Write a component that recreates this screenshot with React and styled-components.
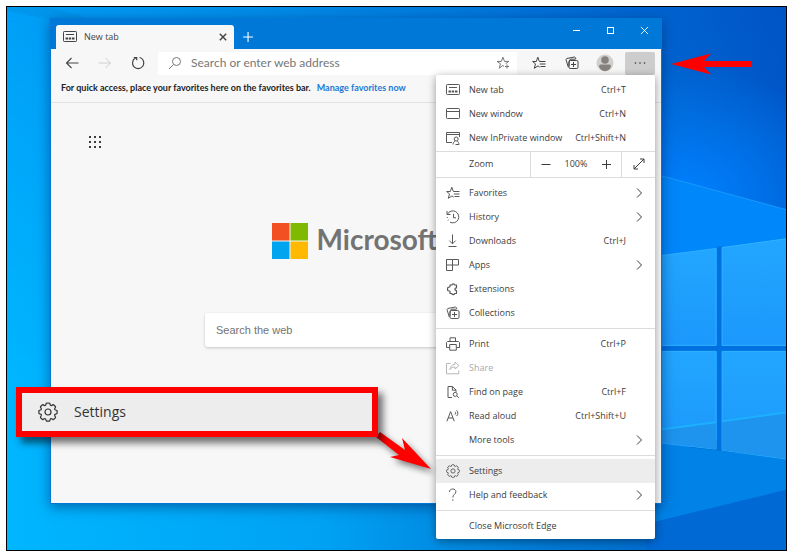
import React from "react";
import styled, { createGlobalStyle } from "styled-components";

const GlobalStyle = createGlobalStyle`
  *, *::before, *::after { box-sizing: border-box; }
  body {
    margin: 0;
    background: #fff;
    color: #333;
    font-family: "Open Sans", "Noto Sans", sans-serif;
    font-size: 9px;
    line-height: 12px;
  }
  button, input { font: inherit; color: inherit; }
  button { padding: 0; border: 0; background: none; }
  svg { display: block; }
`;

/* ---------- icons ---------- */

const Svg = styled.svg`
  flex: none;
  width: ${(p) => p.$size || 14}px;
  height: ${(p) => p.$size || 14}px;
  fill: none;
  stroke: currentColor;
  stroke-width: ${(p) => p.$stroke || 1};
`;

const Icon = ({ size, stroke, box = 14, children }) => (
  <Svg $size={size} $stroke={stroke} viewBox={`0 0 ${box} ${box}`} aria-hidden="true">
    {children}
  </Svg>
);

const TabIcon = () => (
  <Icon>
    <rect x="0.5" y="1.5" width="13" height="10" rx="0.8" />
    <path d="M3 4.500h8" />
    <path d="M2.500 8.500h2.500M5.700 8.500h2.500M9 8.500h2.500" strokeWidth="2" />
  </Icon>
);
const WindowIcon = () => (
  <Icon>
    <rect x="0.5" y="1.5" width="13" height="10" rx="0.8" />
    <path d="M.5 4.500h13" />
  </Icon>
);
const PrivateIcon = () => (
  <Icon>
    <path d="M6 11.500H.5v-10h13V6M.5 3.500h13" />
    <circle cx="10.200" cy="8" r="2" />
    <path d="M7 13.500c.2-2 1.200-3 2.200-3.700M11 9.900c1.200.8 1.800 1.800 2 3.600H9.500" />
  </Icon>
);
const FavoritesIcon = ({ size }) => (
  <Icon size={size}>
    <path d="M13.500 5.500H7.400L5.800 1.200 4.300 5.500H.6L3.500 7.900 2.300 12.300 6 9.900l1.700 1.200M7.800 8h5.700M8.500 10.500h5" />
  </Icon>
);
const HistoryIcon = () => (
  <Icon>
    <path d="M1 1v3.500h3.500M1.500 4A6 6 0 1 1 4 12.200M7.500 3.800v4H10" />
    <path d="M.8 7.500h1M1.800 10.300l.8-.4" />
  </Icon>
);
const DownloadIcon = () => (
  <Icon>
    <path d="M6.500.5v9.300M3.300 6.600l3.200 3.200 3.200-3.200M2.500 12.500h8" />
  </Icon>
);
const AppsIcon = () => (
  <Icon>
    <path d="M.5 1.500h12v5.500H.5zM6.500 1.500v11h-6v-11" />
  </Icon>
);
const ExtensionsIcon = () => (
  <Icon>
    <path d="M4 4.700V3h1.800a1.500 1.500 0 0 1 2.900 0H10.500v2.800c-2.200.2-2.200 2.700 0 2.900v2.800H8.700a1.500 1.500 0 0 1-2.900 0H4V9.300L1.600 8.500V5.700z" strokeWidth="1.200" strokeLinejoin="round" />
  </Icon>
);
const CollectionsIcon = ({ size }) => (
  <Icon size={size}>
    <rect x="4" y="4.500" width="9" height="8" rx="1.200" />
    <path d="M8.500 6v5M6 8.500h5M3.300 11.200L1 3.500l.7-1L9.600 1l.9.700.4 1.300M4 10V6L5.300 3.200h5.200" />
  </Icon>
);
const PrintIcon = () => (
  <Icon>
    <path d="M4 4.500V.8h5.500v3.700M3.500 10.500h-3v-5l1-1h11l1 1v5h-3" />
    <path d="M3.700 7.500h6.600v5.700H3.700z" />
  </Icon>
);
const ShareIcon = () => (
  <Icon>
    <path d="M4.500 2.500h-4v10.300h12.300V9.500M9 1.200l4 3.400-4 3.300V6C6.500 6 5 6.800 3.800 8.700 4.200 5.500 6 3.500 9 3.200z" />
  </Icon>
);
const FindIcon = () => (
  <Icon>
    <path d="M6 12.500H2v-11h4.500L10 5v1.800M6.400 1.500v3.700H10" />
    <circle cx="9.200" cy="9.400" r="2" />
    <path d="M10.700 10.900l2.200 2" />
  </Icon>
);
const ReadIcon = () => (
  <Icon>
    <path d="M.9 12.300L4.600 2.600l3.700 9.700M2.200 9h4.800M9 2.800c.8.8.8 2 0 2.800M10.600 1.300c1.700 1.700 1.700 4.200 0 5.800" />
  </Icon>
);
const gearPath =
  "M8.300 1.300q.8-.6 1.700 0 .9-.6 1.700 0l.7 2q.7.500 1.300.1l1.500-.8q1 .1 1.200 1.200 1.100.2 1.200 1.200l-.8 1.500q-.2.7.1 1.300l2 .7q.5.600 0 1.500.5.900 0 1.700l-2 .7q-.5.600-.1 1.300l.8 1.500q-.1 1-1.200 1.200-.2 1.100-1.200 1.200l-1.500-.8q-.7-.2-1.300.1l-.7 2q-.8.500-1.700 0-.9.500-1.700 0l-.7-2q-.6-.4-1.300-.1l-1.500.8q-1-.1-1.200-1.200-1.100-.2-1.200-1.200l.8-1.500q.3-.7-.1-1.300l-2-.7q-.5-.8 0-1.700-.5-.9 0-1.500l2-.7q.4-.6.1-1.300l-.8-1.500q.1-1 1.200-1.200.2-1.100 1.200-1.200l1.500.8q.7.300 1.300-.1z";
const GearIcon = ({ size, stroke = 1.3 }) => (
  <Icon size={size} stroke={stroke} box={20}>
    <path d={gearPath} strokeLinejoin="round" />
    <circle cx="10" cy="10" r="3" />
  </Icon>
);
const HelpIcon = () => (
  <Icon>
    <path d="M3.500 4C3.500 2 4.800 1 6.700 1c1.900 0 3.200 1 3.200 2.700C9.900 6.200 6.800 6.500 6.800 9.500M6.800 11.300v1.500" />
  </Icon>
);
const ChevronIcon = () => (
  <Icon size={12} box={12}>
    <path d="M4 1.500L8.500 6 4 10.500" />
  </Icon>
);
const MinusIcon = () => <Icon size={10} box={10}><path d="M.5 5.500h9" /></Icon>;
const PlusIcon = ({ size = 10 }) => <Icon size={size} box={10}><path d="M1 5.500h9M5.500 1v9" /></Icon>;
const ExpandIcon = () => (
  <Icon size={12} box={12}>
    <path d="M1 11L11 1M7 1h4v4M1 7v4h4" />
  </Icon>
);
const BackIcon = () => <Icon stroke={1.100}><path d="M13.500 7H1.500M6.500 2L1.500 7l5 5" /></Icon>;
const ForwardIcon = () => <Icon><path d="M.5 7h12M7.500 2l5 5-5 5" /></Icon>;
const ReloadIcon = () => (
  <Icon stroke={1.200}>
    <path d="M8.500 1.500a5.600 5.600 0 0 1 1 10.500M4.800 12A5.600 5.600 0 0 1 5.200 1.700M2.800 1.500h2.900v2.800M4.800 12a5.600 5.600 0 0 0 4.700 0" />
  </Icon>
);
const SearchIcon = () => (
  <Icon>
    <circle cx="8.500" cy="5.500" r="4" />
    <path d="M5.500 8.500L1 13" />
  </Icon>
);
const AddStarIcon = () => (
  <Icon>
    <path d="M8 10.300l-1.200-.8-3.600 2.700 1.300-4.400L1 5.400h4.300L6.900 1.200l1.600 4.200h4.300L9.600 7.700M11 8.500v4M9 10.500h4" />
  </Icon>
);
const CloseIcon = ({ size = 9, stroke = 1 }) => (
  <Icon size={size} stroke={stroke} box={10}><path d="M1 1l8 8M9 1L1 9" /></Icon>
);
const MaximizeIcon = () => <Icon size={9} box={9}><rect x="1.500" y="1.500" width="6" height="6" /></Icon>;
const MinimizeIcon = () => <Icon size={9} box={9}><path d="M1 4.500h7" /></Icon>;
const DotsIcon = () => (
  <Icon>
    <g fill="currentColor" stroke="none">
      <circle cx="2.500" cy="7" r="0.800" />
      <circle cx="7" cy="7" r="0.800" />
      <circle cx="11.500" cy="7" r="0.800" />
    </g>
  </Icon>
);
const ProfileIcon = () => (
  <Icon size={18} box={18}>
    <g stroke="none">
      <circle cx="9" cy="9" r="8.500" fill="#d2d0ce" />
      <circle cx="9" cy="6" r="3.800" fill="#85827e" />
      <path d="M3 12.500c0-1.500 1-2 2-2h8c1 0 2 .5 2 2-1 3-3.500 4.500-6 4.500s-5-1.500-6-4.500z" fill="#85827e" />
    </g>
  </Icon>
);
const GridIcon = () => (
  <Icon>
    <g fill="#3b3b3b" stroke="none">
      {[1, 6, 11].map((y) =>
        [0, 5, 10].map((x) => <rect key={`${x}-${y}`} x={x} y={y} width="2" height="2" />)
      )}
    </g>
  </Icon>
);

/* ---------- desktop ---------- */

const Page = styled.div`
  min-height: 100vh;
  padding: 6px 7px 9px 6px;
`;
const Desktop = styled.div`
  position: relative;
  overflow: hidden;
  min-height: calc(100vh - 15px);
  padding: 11px 124px 46px 43px;
  border: 1px solid #000;
  background: #0088e8;
`;
const WallpaperArt = styled.svg`
  position: absolute;
  inset: 0;
  width: 100%;
  height: 100%;
`;

const Wallpaper = () => (
  <WallpaperArt viewBox="0 0 780 544" preserveAspectRatio="none" aria-hidden="true">
    <defs>
      <linearGradient id="sky" x1="0" y1="0" x2="1" y2="0">
        <stop offset="0" stopColor="#00a0f8" />
        <stop offset="0.35" stopColor="#008ce8" />
        <stop offset="0.7" stopColor="#0070d8" />
        <stop offset="1" stopColor="#0054c6" />
      </linearGradient>
      <linearGradient id="floor" x1="0" y1="0" x2="1" y2="0">
        <stop offset="0" stopColor="#00b6ff" />
        <stop offset="0.4" stopColor="#00a2f4" />
        <stop offset="0.7" stopColor="#0078d4" />
        <stop offset="1" stopColor="#0060cc" />
      </linearGradient>
      <linearGradient id="fade" x1="0" y1="0" x2="0" y2="1">
        <stop offset="0" stopColor="#fff" stopOpacity="0" />
        <stop offset="0.7" stopColor="#fff" />
      </linearGradient>
      <mask id="low"><rect width="780" height="544" fill="url(#fade)" /></mask>
      <radialGradient id="glow">
        <stop offset="0" stopColor="#0080ff" />
        <stop offset="1" stopColor="#0080ff" stopOpacity="0" />
      </radialGradient>
      <linearGradient id="pane" x1="0" y1="0" x2="0" y2="1">
        <stop offset="0" stopColor="#22a6ff" />
        <stop offset="1" stopColor="#1c98fc" />
      </linearGradient>
    </defs>
    <rect width="780" height="544" fill="url(#sky)" />
    <rect width="780" height="544" fill="url(#floor)" mask="url(#low)" />
    <path d="M0 0h40l90 24-90-12L0 4z" fill="#0090e4" opacity="0.500" />
    <ellipse cx="680" cy="190" rx="170" ry="130" fill="url(#glow)" />
    <path d="M640 165L780 203V420L640 450z" fill="#0087fa" />
    <path d="M640 165L780 203" stroke="#189afc" />
    <path d="M711 240h5V452h-5zM640 339h140v6H640z" fill="#0070e0" />
    <path d="M640 436L780 452V484L640 518z" fill="#0082e6" />
    <path d="M640 518L780 484V544H640z" fill="#0069d4" />
    <g fill="url(#pane)" stroke="#30b2ff">
      <path d="M640 251L710 242V339H640z" />
      <path d="M716 241L782 232V339H716z" />
      <path d="M640 345H710V443L640 435z" />
      <path d="M716 345H782V453L716 444z" />
    </g>
    <path d="M640 425L710 416V443L640 435zM716 415L782 406V453L716 444z" fill="#1e94ee" />
    <path d="M640 425L710 416M716 415L782 406" stroke="#1cb0ff" strokeWidth="2" />
  </WallpaperArt>
);

/* ---------- browser window ---------- */

const BrowserWindow = styled.main`
  position: relative;
  display: flex;
  flex-direction: column;
  min-height: calc(100vh - 74px);
  border: 1px solid #0078d7;
  background: #f7f7f7;
  box-shadow: 0 3px 12px rgba(0, 30, 90, 0.5);
`;
const TitleBar = styled.header`
  display: flex;
  height: 30px;
  padding-left: 5px;
  background: #0078d7;
  color: #fff;
`;
const Tab = styled.div`
  display: flex;
  align-items: center;
  gap: 7px;
  width: 178px;
  margin-top: 6px;
  padding: 0 6px 0 7px;
  border-radius: 3px 3px 0 0;
  background: #f7f7f7;
  color: #444;
`;
const TabTitle = styled.span`
  flex: 1;
`;
const TabButton = styled.button`
  display: grid;
  place-items: center;
  width: ${(p) => (p.$wide ? 26 : 10)}px;
  margin-top: ${(p) => (p.$wide ? 5 : 0)}px;
`;
const WindowControls = styled.div`
  display: flex;
  height: 22px;
  margin-left: auto;
`;
const ControlButton = styled.button`
  display: grid;
  place-items: center;
  width: 34px;
`;
const Toolbar = styled.div`
  display: flex;
  align-items: center;
  height: 27px;
  padding: 1px 6px 0 4px;
`;
const ToolButton = styled.button`
  display: grid;
  place-items: center;
  width: 33px;
  height: 22px;
  color: ${(p) => (p.$muted ? "#d0d0d0" : "#444")};
`;
const AddressBar = styled.label`
  display: flex;
  flex: 1;
  align-items: center;
  gap: 9px;
  height: 23px;
  margin: 0 5px 0 4px;
  padding: 0 7px 0 10px;
  border-radius: 2px;
  background: #fff;
  color: #777;
`;
const AddressInput = styled.input`
  flex: 1;
  min-width: 0;
  padding: 0;
  border: 0;
  outline: 0;
  background: none;
  font-family: Lato, "Open Sans", sans-serif;
  font-size: 12px;
  line-height: 18px;
  &::placeholder { color: #777; opacity: 1; }
`;
const MoreAnchor = styled.div`
  position: relative;
  width: 30px;
  margin-left: 4px;
`;
const MoreButton = styled.button`
  display: grid;
  place-items: center;
  width: 100%;
  height: 23px;
  border-radius: 2px;
  background: #cdcdcd;
`;
const FavoritesBar = styled.div`
  display: flex;
  align-items: center;
  gap: 6px;
  height: 27px;
  padding: 0 10px 3px;
  border-bottom: 1px solid #e3e3e3;
  color: #222;
  font-family: Lato, "Open Sans", sans-serif;
  font-weight: 700;
  white-space: nowrap;
`;
const FavoritesLink = styled.a`
  color: #1a7ad4;
  text-decoration: none;
`;
const NewTabPage = styled.section`
  display: flex;
  flex: 1;
  flex-direction: column;
  align-items: center;
  padding: 32px 38px;
`;
const LauncherButton = styled.button`
  align-self: flex-start;
`;
const Brand = styled.div`
  display: flex;
  align-items: center;
  gap: 9px;
  margin: 74px 3px 0 0;
`;
const BrandName = styled.span`
  padding-bottom: 3px;
  color: #737373;
  font-family: Lato, "Open Sans", sans-serif;
  font-size: 28px;
  font-weight: 700;
  line-height: 33px;
`;
const SearchInput = styled.input`
  width: 302px;
  height: 34px;
  margin-top: 54px;
  padding: 0 11px;
  border: 0;
  border-radius: 3px;
  outline: 0;
  background: #fff;
  box-shadow: 0 1px 3px rgba(0, 0, 0, 0.2);
  font-family: "Liberation Sans", Arial, sans-serif;
  font-size: 11px;
  &::placeholder { color: #737373; opacity: 1; }
`;

/* ---------- settings menu ---------- */

const Menu = styled.div`
  position: absolute;
  z-index: 2;
  top: 100%;
  right: 0;
  width: 219px;
  padding: 3px 0 1px;
  border-radius: 2px;
  background: #fff;
  box-shadow: 0 2px 9px rgba(0, 0, 0, 0.4);
`;
const MenuGroup = styled.div`
  & + & {
    margin-top: 3px;
    padding-top: 3px;
    border-top: 1px solid #dcdcdc;
  }
`;
const MenuItem = styled.button`
  display: flex;
  align-items: center;
  gap: 9px;
  width: 100%;
  height: 24px;
  padding: 0 10px;
  background: ${(p) => (p.$active ? "#ededed" : "transparent")};
  color: ${(p) => (p.disabled ? "#aaa" : "#3c3c3c")};
  text-align: left;
  white-space: nowrap;
`;
const IconSlot = styled.span`
  width: 14px;
  opacity: 0.85;
`;
const ItemLabel = styled.span`
  flex: 1;
`;
const Shortcut = styled.span`
  margin-right: 19px;
`;
const ZoomRow = styled.div`
  display: flex;
  height: 26px;
  margin: 1px 0 -3px;
  border-top: 1px solid #dcdcdc;
  color: #3c3c3c;
`;
const ZoomLabel = styled.span`
  flex: 1;
  align-self: center;
  padding-left: 33px;
`;
const ZoomControls = styled.div`
  display: flex;
  align-items: center;
  justify-content: space-between;
  width: 92px;
  padding: 0 10px;
  border: 1px solid #dcdcdc;
  border-width: 0 1px;
`;
const IconButton = styled.button`
  display: grid;
  place-items: center;
`;
const ExpandButton = styled(IconButton)`
  width: 33px;
`;

const groups = [
  [
    { label: "New tab", icon: TabIcon, keys: "Ctrl+T" },
    { label: "New window", icon: WindowIcon, keys: "Ctrl+N" },
    { label: "New InPrivate window", icon: PrivateIcon, keys: "Ctrl+Shift+N" },
    { zoom: true },
  ],
  [
    { label: "Favorites", icon: FavoritesIcon, more: true },
    { label: "History", icon: HistoryIcon, more: true },
    { label: "Downloads", icon: DownloadIcon, keys: "Ctrl+J" },
    { label: "Apps", icon: AppsIcon, more: true },
    { label: "Extensions", icon: ExtensionsIcon },
    { label: "Collections", icon: CollectionsIcon },
  ],
  [
    { label: "Print", icon: PrintIcon, keys: "Ctrl+P" },
    { label: "Share", icon: ShareIcon, disabled: true },
    { label: "Find on page", icon: FindIcon, keys: "Ctrl+F" },
    { label: "Read aloud", icon: ReadIcon, keys: "Ctrl+Shift+U" },
    { label: "More tools", more: true },
  ],
  [
    { label: "Settings", icon: GearIcon, active: true },
    { label: "Help and feedback", icon: HelpIcon, more: true },
  ],
  [{ label: "Close Microsoft Edge" }],
];

const Zoom = () => (
  <ZoomRow>
    <ZoomLabel>Zoom</ZoomLabel>
    <ZoomControls>
      <IconButton aria-label="Zoom out"><MinusIcon /></IconButton>
      <span>100%</span>
      <IconButton aria-label="Zoom in"><PlusIcon /></IconButton>
    </ZoomControls>
    <ExpandButton aria-label="Full screen"><ExpandIcon /></ExpandButton>
  </ZoomRow>
);

const Item = ({ label, icon: ItemIcon, keys, more, active, disabled }) => (
  <MenuItem $active={active} disabled={disabled}>
    <IconSlot>{ItemIcon && <ItemIcon size={14} />}</IconSlot>
    <ItemLabel>{label}</ItemLabel>
    {keys && <Shortcut>{keys}</Shortcut>}
    {more && <ChevronIcon />}
  </MenuItem>
);

/* ---------- annotations ---------- */

const Callout = styled.div`
  position: absolute;
  z-index: 3;
  top: 368px;
  right: 283px;
  left: -35px;
  display: flex;
  align-items: center;
  gap: 16px;
  height: 50px;
  padding: 0 16px;
  border: 6px solid #f00;
  background: #ededed;
  box-shadow: 5px 6px 7px rgba(0, 0, 0, 0.55);
  color: #333;
  font-size: 14px;
  line-height: 20px;
`;
const MenuArrow = styled.svg`
  position: absolute;
  z-index: 4;
  bottom: 62px;
  left: -64px;
  width: 68px;
  height: 48px;
  filter: drop-shadow(3px 4px 3px rgba(0, 0, 0, 0.5));
`;
const MoreArrow = styled.svg`
  position: absolute;
  top: 0;
  left: 46px;
  width: 82px;
  height: 24px;
`;

export default function App() {
  return (
    <Page>
      <GlobalStyle />
      <Desktop>
        <Wallpaper />
        <BrowserWindow>
          <TitleBar>
            <Tab>
              <TabIcon />
              <TabTitle>New tab</TabTitle>
              <TabButton aria-label="Close tab"><CloseIcon size={8} stroke={1.800} /></TabButton>
            </Tab>
            <TabButton $wide aria-label="Add tab"><PlusIcon size={11} /></TabButton>
            <WindowControls>
              <ControlButton aria-label="Minimize"><MinimizeIcon /></ControlButton>
              <ControlButton aria-label="Maximize"><MaximizeIcon /></ControlButton>
              <ControlButton aria-label="Close"><CloseIcon /></ControlButton>
            </WindowControls>
          </TitleBar>
          <Toolbar>
            <ToolButton aria-label="Back"><BackIcon /></ToolButton>
            <ToolButton aria-label="Forward" $muted><ForwardIcon /></ToolButton>
            <ToolButton aria-label="Refresh"><ReloadIcon /></ToolButton>
            <AddressBar>
              <SearchIcon />
              <AddressInput aria-label="Address" placeholder="Search or enter web address" />
              <AddStarIcon />
            </AddressBar>
            <ToolButton aria-label="Favorites"><FavoritesIcon /></ToolButton>
            <ToolButton aria-label="Collections"><CollectionsIcon /></ToolButton>
            <ToolButton aria-label="Profile"><ProfileIcon /></ToolButton>
            <MoreAnchor>
              <MoreButton aria-label="Settings and more"><DotsIcon /></MoreButton>
              <Menu>
                {groups.map((items, i) => (
                  <MenuGroup key={i}>
                    {items.map((item) =>
                      item.zoom ? <Zoom key="zoom" /> : <Item key={item.label} {...item} />
                    )}
                  </MenuGroup>
                ))}
                <MenuArrow viewBox="0 0 68 48" aria-hidden="true">
                  <path d="M4 8L8 3 33 21 30 9 59 40 18 28 27 26z" fill="#f00" />
                </MenuArrow>
              </Menu>
              <MoreArrow viewBox="0 0 82 24" aria-hidden="true">
                <path d="M0 12L40 1.500 33 9H81v6H33l7 7.500z" fill="#f00" />
              </MoreArrow>
            </MoreAnchor>
          </Toolbar>
          <FavoritesBar>
            <span>For quick access, place your favorites here on the favorites bar.</span>
            <FavoritesLink href="#favorites">Manage favorites now</FavoritesLink>
          </FavoritesBar>
          <NewTabPage>
            <LauncherButton aria-label="App launcher"><GridIcon /></LauncherButton>
            <Brand>
              <Icon size={36} box={37}>
                <g stroke="none">
                  <path d="M0 0h18v18H0z" fill="#f25022" />
                  <path d="M19 0h18v18H19z" fill="#7fba00" />
                  <path d="M0 19h18v18H0z" fill="#00a4ef" />
                  <path d="M19 19h18v18H19z" fill="#ffb900" />
                </g>
              </Icon>
              <BrandName>Microsoft</BrandName>
            </Brand>
            <SearchInput aria-label="Search the web" placeholder="Search the web" />
          </NewTabPage>
          <Callout>
            <GearIcon size={20} stroke={1.200} />
            <span>Settings</span>
          </Callout>
        </BrowserWindow>
      </Desktop>
    </Page>
  );
}
